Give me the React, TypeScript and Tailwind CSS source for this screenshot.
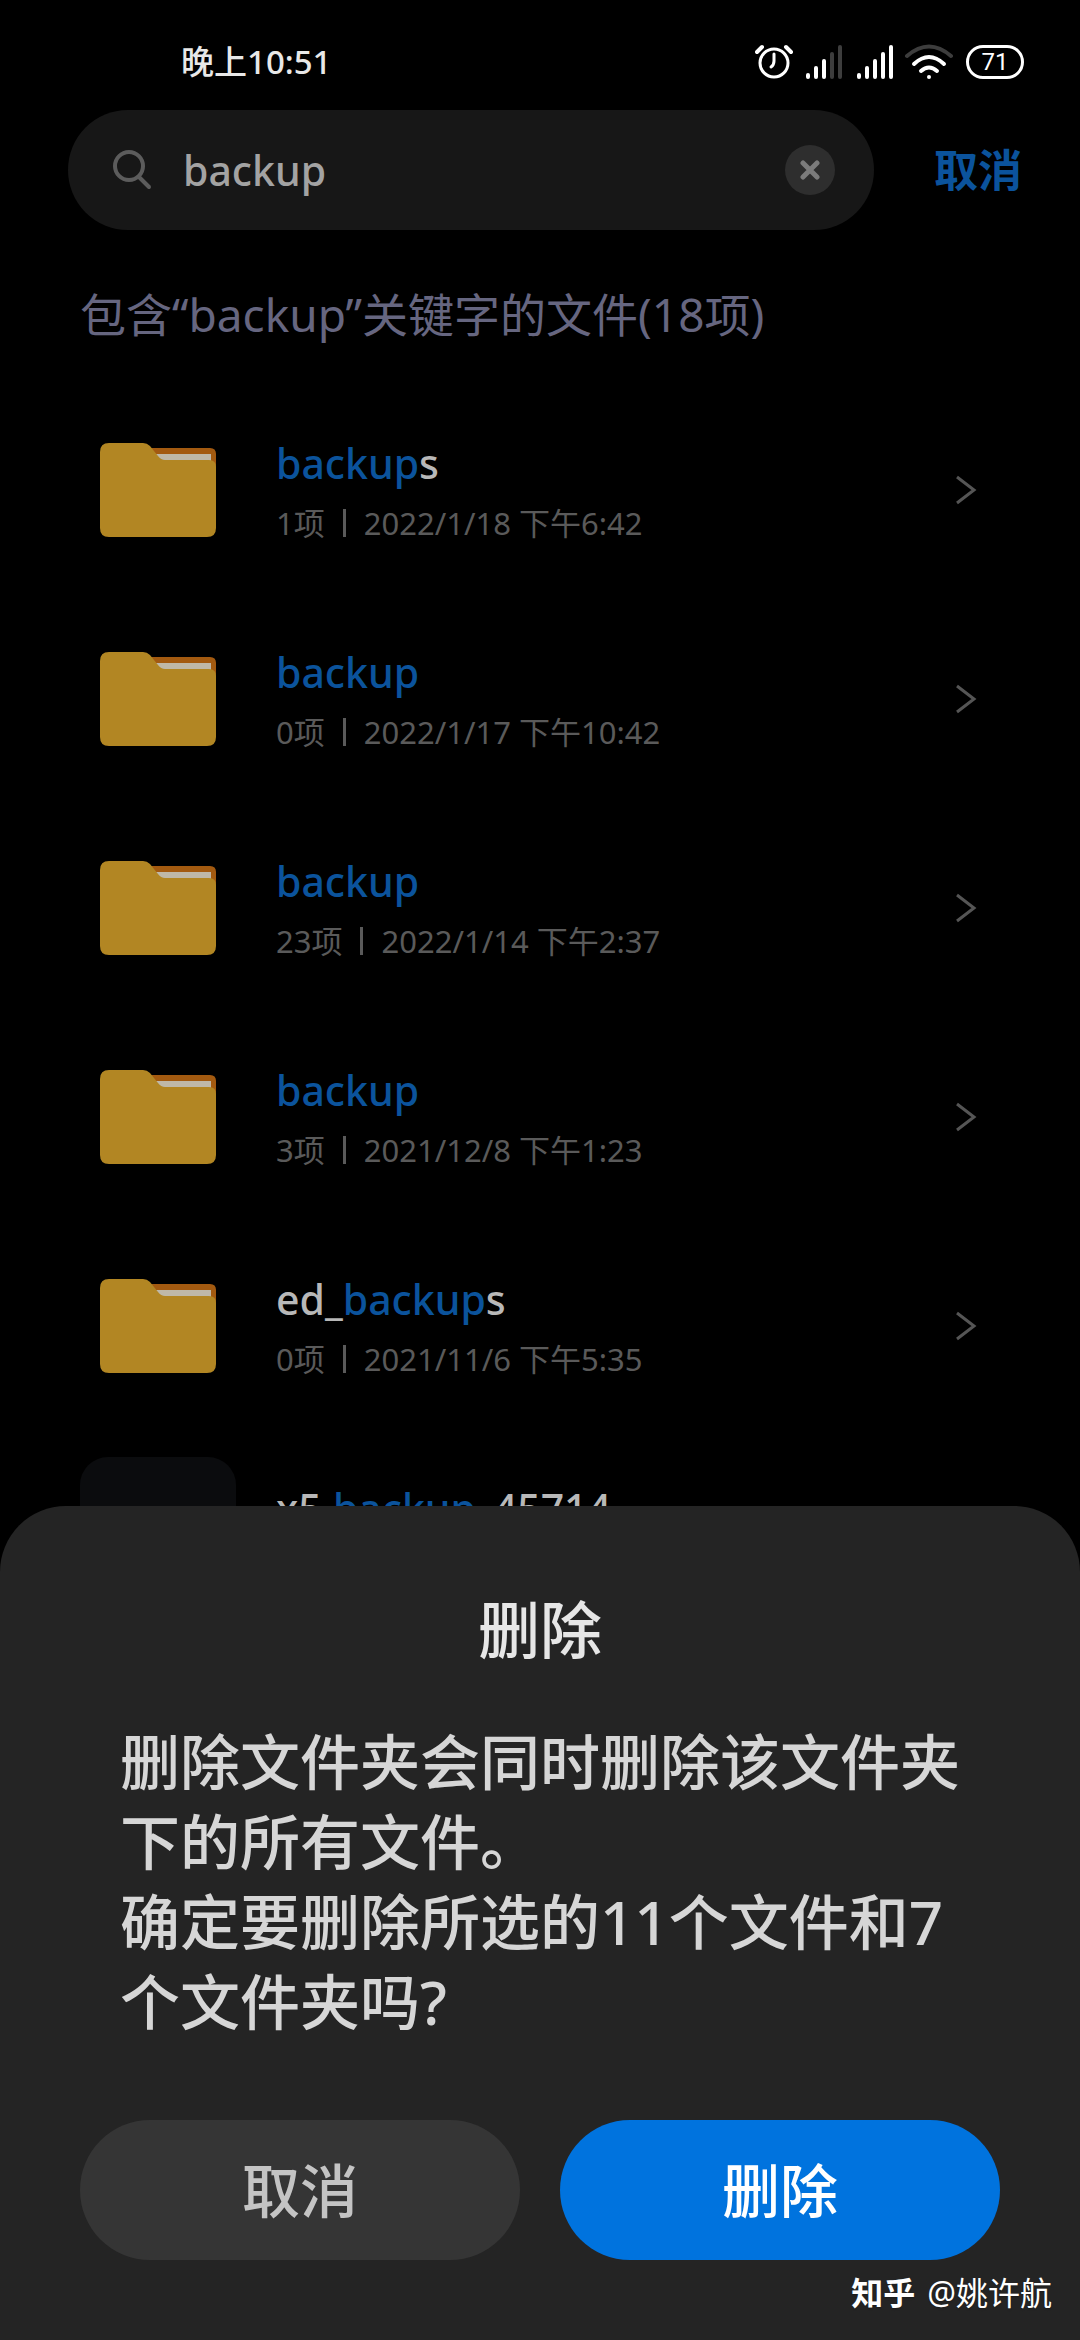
import { useState } from "react";

type Entry = {
  before: string;
  match: string;
  after: string;
  count: string;
  date: string;
  kind: "folder" | "file";
};

const entries: Entry[] = [
  { before: "", match: "backup", after: "s", count: "1项", date: "2022/1/18 下午6:42", kind: "folder" },
  { before: "", match: "backup", after: "", count: "0项", date: "2022/1/17 下午10:42", kind: "folder" },
  { before: "", match: "backup", after: "", count: "23项", date: "2022/1/14 下午2:37", kind: "folder" },
  { before: "", match: "backup", after: "", count: "3项", date: "2021/12/8 下午1:23", kind: "folder" },
  { before: "ed_", match: "backup", after: "s", count: "0项", date: "2021/11/6 下午5:35", kind: "folder" },
  { before: "x5.", match: "backup", after: "_45714", count: "", date: "", kind: "file" },
];

const SignalIcon = ({ level }: { level: number }) => (
  <svg width="38" height="36" viewBox="0 0 38 36" aria-hidden="true">
    {[6, 13, 20, 27, 34].map((height, index) => (
      <rect
        key={height}
        x={1 + index * 8}
        y={35 - height}
        width="4"
        height={height}
        rx="2"
        fill={index < level ? "#ffffff" : "#3d3d3d"}
      />
    ))}
  </svg>
);

const StatusBar = () => (
  <header className="flex h-[110px] items-center justify-between pl-[181px] pr-[56px] pt-[14px]">
    <span className="text-[33px] leading-[40px] font-medium text-[#e8e8e8]">晚上10:51</span>
    <div className="flex items-center">
      <svg width="40" height="36" viewBox="0 0 40 36" fill="none" stroke="#ffffff" strokeWidth="3" strokeLinecap="round" aria-hidden="true">
        <circle cx="19" cy="19" r="14" />
        <path d="M2 8 L7 3 M36 8 L31 3" strokeWidth="4" />
        <path d="M19 10 V17 Q19 21 16 23" />
      </svg>
      <div className="ml-[10px] flex gap-[13px]">
        <SignalIcon level={3} />
        <SignalIcon level={5} />
      </div>
      <svg className="ml-[10px]" width="50" height="36" viewBox="0 0 50 36" fill="none" strokeWidth="4" strokeLinecap="round" aria-hidden="true">
        <path d="M3 12 Q25 -7 47 12" stroke="#3d3d3d" />
        <path d="M10 20 Q25 6 40 20" stroke="#ffffff" />
        <path d="M17 27 Q25 20 33 27" stroke="#ffffff" />
        <circle cx="25" cy="33" r="2" fill="#ffffff" />
      </svg>
      <span className="ml-3 flex h-[34px] w-[58px] items-center justify-center rounded-full border-3 border-white bg-black font-['Roboto',sans-serif] text-[24px] leading-none text-white">
        71
      </span>
    </div>
  </header>
);

const FolderIcon = () => (
  <svg width="116" height="94" viewBox="0 0 116 94" aria-hidden="true">
    <path d="M40 5 H110 Q116 5 116 11 V40 H40 Z" fill="#a35a10" />
    <path d="M50 11 H111 V30 H50 Z" fill="#bfb8a8" />
    <path
      d="M9 0 H43 Q47 0 50 3 L58 13 Q61 17 65 17 H109 Q116 17 116 24 V85 Q116 94 107 94 H9 Q0 94 0 85 V9 Q0 0 9 0 Z"
      fill="#b28623"
    />
  </svg>
);

const EntryRow = ({ entry }: { entry: Entry }) => (
  <li className="flex h-[209px] items-center pr-[102px] pl-[80px]">
    <div className="flex size-[156px] shrink-0 items-center justify-center">
      {entry.kind === "folder" ? (
        <FolderIcon />
      ) : (
        <div className="size-full rounded-[28px] bg-[#0b0c0e]" />
      )}
    </div>
    <div className="ml-10 min-w-0 grow pt-1">
      <h2 className="h-[60px] text-[41px] leading-[60px] font-medium text-[#b8b8b8]">
        {entry.before}
        <span className="text-[#0b539c]">{entry.match}</span>
        {entry.after}
      </h2>
      <p className="mt-0.5 flex h-[56px] items-center text-[31px] leading-[56px] text-[#5a5a5a]">
        {entry.date && (
          <>
            <span>{entry.count}</span>
            <span className="mx-[18px] h-7 w-[3px] bg-[#5a5a5a]" />
            <span>{entry.date}</span>
          </>
        )}
      </p>
    </div>
    {entry.kind === "folder" && (
      <svg width="24" height="32" viewBox="0 0 24 32" fill="none" stroke="#555555" strokeWidth="3" aria-hidden="true">
        <path d="M3 3 L20 16 L3 29" />
      </svg>
    )}
  </li>
);

const DeleteDialog = () => (
  <section
    role="dialog"
    aria-labelledby="dialog-title"
    className="absolute inset-x-0 bottom-0 rounded-t-[66px] bg-[#242424] px-20 pt-[84px] pb-20"
  >
    <h1 id="dialog-title" className="text-center text-[62px] leading-[80px] font-medium text-[#e6e6e6]">
      删除
    </h1>
    <p className="mt-[52px] px-10 text-[60px] leading-[80px] font-medium text-[#d6d6d6]">
      删除文件夹会同时删除该文件夹下的所有文件。
      <br />
      确定要删除所选的11个文件和7个文件夹吗?
    </p>
    <div className="mt-[78px] grid grid-cols-2 gap-10">
      <button type="button" className="h-[140px] rounded-full bg-[#353535] text-[58px] font-medium text-[#c4c4c4]">
        取消
      </button>
      <button type="button" className="h-[140px] rounded-full bg-[#0073de] text-[58px] font-medium text-white">
        删除
      </button>
    </div>
  </section>
);

const App = () => {
  const [query, setQuery] = useState("backup");

  return (
    <div
      lang="zh-CN"
      className="relative min-h-screen overflow-hidden bg-black font-['Noto_Sans','Noto_Sans_CJK_SC',sans-serif]"
    >
      <StatusBar />
      <div className="flex items-center pr-[58px] pl-[68px]">
        <label className="flex h-[120px] min-w-0 grow items-center rounded-full bg-[#171717] pr-[39px] pl-[45px]">
          <svg width="42" height="42" viewBox="0 0 42 42" fill="none" stroke="#5c5c5c" strokeWidth="4" strokeLinecap="round" aria-hidden="true">
            <circle cx="16" cy="17" r="14" />
            <path d="M26 28 L36 38" />
          </svg>
          <input
            aria-label="搜索"
            value={query}
            onChange={(event) => setQuery(event.target.value)}
            className="ml-7 min-w-0 grow bg-transparent text-[41px] leading-[60px] font-medium text-[#a3a3a3] outline-none"
          />
          <button type="button" aria-label="清除" onClick={() => setQuery("")} className="flex size-[50px] items-center justify-center rounded-full bg-[#2e2e2e]">
            <svg width="20" height="20" viewBox="0 0 20 20" fill="none" stroke="#7c7c7c" strokeWidth="5" strokeLinecap="round" aria-hidden="true">
              <path d="M3 3 L17 17 M17 3 L3 17" />
            </svg>
          </button>
        </label>
        <button type="button" className="ml-[60px] text-[44px] leading-[60px] font-bold text-[#0b539c]">
          取消
        </button>
      </div>
      <p className="mt-[54px] mb-[41px] px-[80px] text-[46px] leading-[60px] text-[#666680]">
        包含“backup”关键字的文件(18项)
      </p>
      <ul>
        {entries.map((entry, index) => (
          <EntryRow key={index} entry={entry} />
        ))}
      </ul>
      <DeleteDialog />
      <p className="absolute right-[28px] bottom-[27px] flex gap-3 text-[32px] leading-[40px] text-white text-shadow-sm">
        <span className="font-bold">知乎</span>
        <span>@姚许航</span>
      </p>
    </div>
  );
};

export default App;
